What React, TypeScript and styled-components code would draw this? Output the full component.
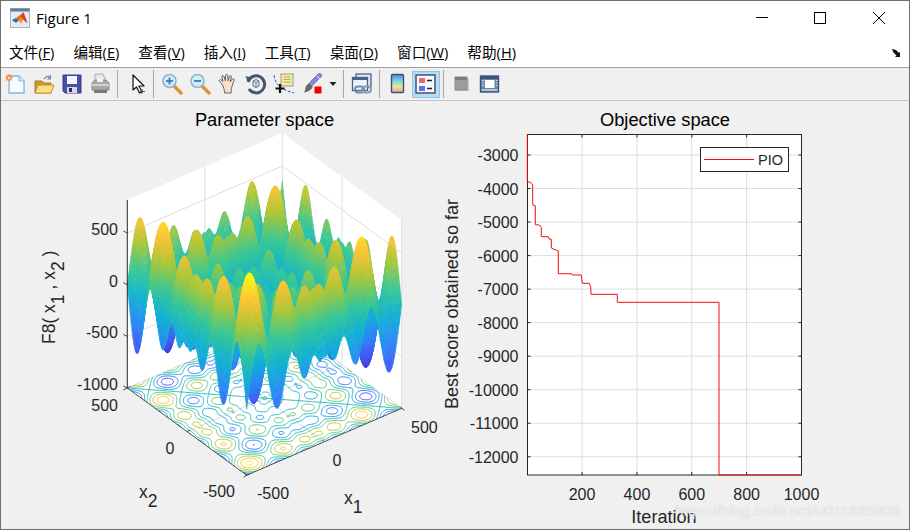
import React, { useMemo } from "react";
import styled, { createGlobalStyle } from "styled-components";

const Global = createGlobalStyle`
  html, body { margin: 0; padding: 0; background: #f0f0f0; }
  #root { width: 910px; height: 530px; }
`;

const Window = styled.div`
  position: relative;
  box-sizing: border-box;
  width: 910px;
  height: 530px;
  border: 1px solid #707070;
  display: flex;
  flex-direction: column;
  background: #f0f0f0;
  overflow: hidden;
`;
const TitleBar = styled.div`
  height: 35px;
  flex: none;
  background: #fff;
  display: flex;
  align-items: center;
  padding: 0 1px 2px 9px;
  box-sizing: border-box;
  font: 15px "Open Sans", "Noto Sans", sans-serif;
  color: #000;
`;
const TitleText = styled.span`
  margin-left: 6px;
  flex: 1;
`;
const WinButton = styled.div`
  width: 58.5px;
  height: 33px;
  display: flex;
  align-items: center;
  justify-content: center;
`;
const MenuBar = styled.div`
  height: 32px;
  flex: none;
  background: #fff;
  display: flex;
  align-items: center;
  gap: 19px;
  padding: 2px 0 3px 8px;
  box-sizing: border-box;
  font: 14.6px "Open Sans", "Noto Sans CJK SC", sans-serif;
  color: #000;
  border-bottom: 1px solid #a0a0a0;
  position: relative;
`;
const MenuItem = styled.span`
  white-space: nowrap;
`;
const DockArrow = styled.svg`
  position: absolute;
  right: 6px;
  top: 12px;
`;
const Toolbar = styled.div`
  height: 33px;
  flex: none;
  box-sizing: border-box;
  display: flex;
  align-items: center;
  border-bottom: 1px solid #c4c4c4;
  background: #f0f0f0;
`;
const ToolButton = styled.div<{ $active?: boolean; $narrow?: boolean; $first?: boolean }>`
  width: ${(p) => (p.$narrow ? 14 : 28)}px;
  height: 27px;
  box-sizing: border-box;
  flex: none;
  margin-left: ${(p) => (p.$first ? 1 : 0)}px;
  display: flex;
  align-items: center;
  justify-content: center;
  background: ${(p) => (p.$active ? "#bcdcf4" : "transparent")};
  border: 1px solid ${(p) => (p.$active ? "#8cc4ee" : "transparent")};
`;
const Separator = styled.div<{ $l: number; $r: number }>`
  width: 1px;
  height: 28px;
  flex: none;
  background: #a8a8a8;
  margin-left: ${(p) => p.$l}px;
  margin-right: ${(p) => p.$r}px;
`;
const Canvas = styled.div`
  flex: 1;
  display: flex;
  min-height: 0;
`;
const LeftChart = styled.svg`
  display: block;
  width: 439px;
  height: 428px;
  flex: none;
`;
const RightChart = styled.svg`
  display: block;
  width: 469px;
  height: 428px;
  flex: none;
`;
const Label = styled.text`
  font-family: "Liberation Sans", Arial, sans-serif;
  font-size: 16px;
  fill: #262626;
`;
const Heading = styled(Label)`
  fill: #000;
  font-size: 18.3px;
`;
const AxisLabel = styled(Label)<{ $large?: boolean }>`
  font-size: ${(p) => (p.$large ? 18.1 : 17.5)}px;
`;
const LegendText = styled(Label)`
  font-size: 14.5px;
`;
const Watermark = styled.span`
  position: absolute;
  right: 9px;
  bottom: 9px;
  font: 15.3px "Liberation Sans", Arial, sans-serif;
  color: rgba(255, 255, 255, 0.72);
  text-shadow: 0 0 1px rgba(150, 150, 150, 0.55);
  white-space: nowrap;
`;

/* ---------- maths ---------- */
const STOPS = [
  [0.2422, 0.1504, 0.6603],
  [0.281, 0.3228, 0.9579],
  [0.1786, 0.5289, 0.9682],
  [0.0689, 0.6948, 0.8394],
  [0.2161, 0.7843, 0.5923],
  [0.672, 0.7793, 0.2227],
  [0.997, 0.7659, 0.2199],
  [0.9769, 0.9839, 0.0805],
];
function parula(t: number) {
  const v = Math.max(0, Math.min(1, t)) * (STOPS.length - 1);
  const i = Math.min(STOPS.length - 2, Math.floor(v));
  const f = v - i;
  const c = STOPS[i].map((a, k) => Math.round(255 * (a + (STOPS[i + 1][k] - a) * f)));
  return `rgb(${c[0]},${c[1]},${c[2]})`;
}
const F = (a: number, b: number) => -a * Math.sin(Math.sqrt(Math.abs(a))) - b * Math.sin(Math.sqrt(Math.abs(b)));
const ZMAX = 838;
const B = [246.7, 475.2];
const R = [401.7, 408.3];
const L = [127.3, 388];
function P(x1: number, x2: number, z: number): [number, number] {
  const a = (x1 + 500) / 1000;
  const b = (x2 + 500) / 1000;
  return [
    B[0] + a * (R[0] - B[0]) + b * (L[0] - B[0]),
    B[1] + a * (R[1] - B[1]) + b * (L[1] - B[1]) - (z + 1000) * 0.1033,
  ];
}
const pt = (p: [number, number]) => `${p[0].toFixed(2)} ${p[1].toFixed(2)}`;

function buildSurface() {
  const N = 125;
  const step = 1000 / N;
  const runs: { c: number; d: string }[] = [];
  for (let i = N - 1; i >= 0; i--) {
    for (let j = N - 1; j >= 0; j--) {
      const x0 = -500 + i * step;
      const x1 = x0 + step;
      const y0 = -500 + j * step;
      const y1 = y0 + step;
      const z00 = F(x0, y0);
      const z10 = F(x1, y0);
      const z11 = F(x1, y1);
      const z01 = F(x0, y1);
      const avg = (z00 + z10 + z11 + z01) / 4;
      const c = Math.max(0, Math.min(63, Math.floor(((avg + ZMAX) / (2 * ZMAX)) * 64)));
      const d = `M${pt(P(x0, y0, z00))}L${pt(P(x1, y0, z10))}L${pt(P(x1, y1, z11))}L${pt(P(x0, y1, z01))}Z`;
      const last = runs[runs.length - 1];
      if (last && last.c === c) last.d += d;
      else runs.push({ c, d });
    }
  }
  return runs;
}
function buildContours() {
  const N = 240;
  const step = 1000 / N;
  const res: { level: number; d: string }[] = [];
  for (let level = -800; level <= 800; level += 200) {
    let d = "";
    for (let i = 0; i < N; i++) {
      for (let j = 0; j < N; j++) {
        const x0 = -500 + i * step;
        const y0 = -500 + j * step;
        const x1 = x0 + step;
        const y1 = y0 + step;
        const cs: [number, number, number, number][] = [
          [x0, y0, x1, y0],
          [x1, y0, x1, y1],
          [x1, y1, x0, y1],
          [x0, y1, x0, y0],
        ];
        const pts: [number, number][] = [];
        for (const [ax, ay, bx, by] of cs) {
          const za = F(ax, ay) - level;
          const zb = F(bx, by) - level;
          if (za < 0 !== zb < 0) {
            const t = za / (za - zb);
            pts.push(P(ax + (bx - ax) * t, ay + (by - ay) * t, -1000));
          }
        }
        if (pts.length >= 2) d += `M${pt(pts[0])}L${pt(pts[1])}`;
        if (pts.length === 4) d += `M${pt(pts[2])}L${pt(pts[3])}`;
      }
    }
    res.push({ level, d });
  }
  return res;
}
const poly = (a: [number, number][]) => a.map((p) => p.map((v) => v.toFixed(2)).join(",")).join(" ");

/* ---------- 3D plot ---------- */
const GRID = "#dedede";
function Surface3D() {
  const runs = useMemo(buildSurface, []);
  const contours = useMemo(buildContours, []);
  const top = ZMAX - 18;
  const wallLines: [[number, number], [number, number]][] = [];
  for (const z of [-1000, -500, 0, 500]) {
    wallLines.push([P(-500, 500, z), P(500, 500, z)]);
    wallLines.push([P(500, 500, z), P(500, -500, z)]);
  }
  for (const [a, b] of [
    [0, 500],
    [500, 500],
    [500, 0],
    [500, -500],
  ]) {
    wallLines.push([P(a, b, -1000), P(a, b, top)]);
  }
  wallLines.push([P(0, -500, -1000), P(0, 500, -1000)]);
  wallLines.push([P(-500, 0, -1000), P(500, 0, -1000)]);
  const outline: [number, number][] = [
    P(-500, -500, -1000),
    P(500, -500, -1000),
    P(500, -500, top),
    P(500, 500, top),
    P(-500, 500, top),
    P(-500, 500, -1000),
  ];
  const axis = "#262626";
  const tick = (p: [number, number], dx: number, dy: number, k: string) => (
    <line key={k} x1={p[0]} y1={p[1]} x2={p[0] + dx} y2={p[1] + dy} stroke={axis} strokeWidth={0.8} />
  );
  return (
    <LeftChart viewBox="1 101 439 428">
      <polygon points={poly(outline)} fill="#fff" />
      {wallLines.map((l, i) => (
        <line key={i} x1={l[0][0]} y1={l[0][1]} x2={l[1][0]} y2={l[1][1]} stroke={GRID} strokeWidth={1} />
      ))}
      {contours.map((c) => (
        <path key={c.level} d={c.d} fill="none" stroke={parula((c.level + ZMAX) / (2 * ZMAX))} strokeWidth={1} />
      ))}
      {runs.map((r, i) => {
        const col = parula((r.c + 0.5) / 64);
        return <path key={i} d={r.d} fill={col} stroke={col} strokeWidth={0.6} strokeLinejoin="round" />;
      })}
      <line x1={L[0]} y1={L[1]} x2={B[0]} y2={B[1]} stroke={axis} strokeWidth={0.8} />
      <line x1={B[0]} y1={B[1]} x2={R[0]} y2={R[1]} stroke={axis} strokeWidth={0.8} />
      <line x1={L[0]} y1={L[1]} x2={L[0]} y2={P(-500, 500, top)[1]} stroke={axis} strokeWidth={1} />
      {[-1000, -500, 0, 500].map((z) => tick(P(-500, 500, z), -4, -2, `z${z}`))}
      {[-500, 0, 500].map((v) => tick(P(-500, v, -1000), 3, -1.5, `a${v}`))}
      {[-500, 0, 500].map((v) => tick(P(v, -500, -1000), -2, -2, `b${v}`))}
      {tick(P(500, -500, -1000), 3, 2, "c")}
      {tick(P(-500, -500, -1000), -3, 2, "d")}
      {tick(P(-500, 500, -1000), -4, 2, "e")}

      <Heading x={264.5} y={126} textAnchor="middle">Parameter space</Heading>
      <Label x={118} y={235} textAnchor="end">500</Label>
      <Label x={118} y={287} textAnchor="end">0</Label>
      <Label x={118} y={338} textAnchor="end">-500</Label>
      <Label x={118} y={390} textAnchor="end">-1000</Label>
      <Label x={118} y={411} textAnchor="end">500</Label>
      <Label x={170} y={454} textAnchor="middle">0</Label>
      <Label x={235} y={497} textAnchor="end">-500</Label>
      <Label x={257} y={499}>-500</Label>
      <Label x={337} y={466} textAnchor="middle">0</Label>
      <Label x={411} y={433}>500</Label>
      <AxisLabel x={139} y={498}>
        x<tspan dy={9}>2</tspan>
      </AxisLabel>
      <AxisLabel x={344} y={504}>
        x<tspan dy={9}>1</tspan>
      </AxisLabel>
      <AxisLabel transform="translate(55 344) rotate(-90)">
        F8( x<tspan dy={9}>1</tspan>
        <tspan dy={-9}> , x</tspan>
        <tspan dy={9}>2</tspan>
        <tspan dy={-9}> )</tspan>
      </AxisLabel>
    </LeftChart>
  );
}

/* ---------- 2D plot ---------- */
const AX = { l: 527.5, r: 801.5, t: 134.5, b: 475 };
const CURVE: [number, number][] = [
  [52, 13], [52, 155], [62, 157], [68, 165], [68, 225], [76, 227], [76, 284], [88, 285], [94, 292], [94, 320],
  [115, 320], [117, 327], [124, 328], [124, 354], [132, 358], [145, 363], [145, 431], [185, 431], [187, 435],
  [214, 435], [217, 460], [238, 460], [242, 470], [243, 493], [322, 493], [322, 517], [627, 517], [627, 1035], [875, 1035],
];
function ConvergencePlot() {
  const xt = [200, 400, 600, 800, 1000];
  const yt = [-3000, -4000, -5000, -6000, -7000, -8000, -9000, -10000, -11000, -12000];
  const X = (v: number) => AX.l + ((v - 1) / 999) * (AX.r - AX.l);
  const Y = (v: number) => 155 + (-3000 - v) * 0.03353;
  const dark = "#262626";
  const curve = CURVE.map(([x, y]) => `${(510 + x / 3).toFixed(1)},${(130 + y / 3).toFixed(1)}`).join(" ");
  return (
    <RightChart viewBox="440 101 469 428">
      <rect x={AX.l} y={AX.t} width={AX.r - AX.l} height={AX.b - AX.t} fill="#fff" />
      {xt.slice(0, 4).map((v) => (
        <line key={v} x1={X(v)} x2={X(v)} y1={AX.t} y2={AX.b} stroke={GRID} />
      ))}
      {yt.map((v) => (
        <line key={v} x1={AX.l} x2={AX.r} y1={Y(v)} y2={Y(v)} stroke={GRID} />
      ))}
      {xt.map((v) => (
        <g key={v}>
          <line x1={X(v)} x2={X(v)} y1={AX.b} y2={AX.b - 3} stroke={dark} />
          <line x1={X(v)} x2={X(v)} y1={AX.t} y2={AX.t + 3} stroke={dark} />
          <Label x={X(v)} y={500} textAnchor="middle">{v}</Label>
        </g>
      ))}
      {yt.map((v) => (
        <g key={v}>
          <line x1={AX.l} x2={AX.l + 3} y1={Y(v)} y2={Y(v)} stroke={dark} />
          <line x1={AX.r} x2={AX.r - 3} y1={Y(v)} y2={Y(v)} stroke={dark} />
          <Label x={518.5} y={Y(v) + 6} textAnchor="end">{v}</Label>
        </g>
      ))}
      <rect x={AX.l} y={AX.t} width={AX.r - AX.l} height={AX.b - AX.t} fill="none" stroke={dark} />
      <polyline points={curve} fill="none" stroke="#f01010" strokeWidth={1} />
      <rect x={700.5} y={147.5} width={88} height={24} fill="#fff" stroke={dark} />
      <line x1={704} x2={754} y1={159.5} y2={159.5} stroke="#f01010" />
      <LegendText x={758} y={165}>PIO</LegendText>
      <Heading x={665} y={126} textAnchor="middle">Objective space</Heading>
      <AxisLabel $large x={664} y={523} textAnchor="middle">Iteration</AxisLabel>
      <AxisLabel $large transform="translate(458 304) rotate(-90)" textAnchor="middle">Best score obtained so far</AxisLabel>
    </RightChart>
  );
}

/* ---------- icons ---------- */
const Icon = ({ children, w = 22, h = 22 }: { children: React.ReactNode; w?: number; h?: number }) => (
  <svg width={w} height={h} viewBox={`0 0 ${w} ${h}`}>{children}</svg>
);
const IconNew = () => (
  <Icon>
    <path d="M4 3h10l5 5v12H4z" fill="#f6fbff" stroke="#8fb4d4" strokeWidth="1.4" />
    <path d="M14 3v5h5" fill="#d4e6f4" stroke="#8fb4d4" />
    <path d="M4 0.5l1 2 2.3-1-1 2.3 2 1-2 1 1 2.3-2.3-1-1 2-1-2-2.3 1 1-2.3-2-1 2-1-1-2.3 2.3 1z" fill="#f08a50" />
    <circle cx="4" cy="5" r="1.3" fill="#fde2c8" />
  </Icon>
);
const IconOpen = () => (
  <Icon>
    <path d="M2 8h7l2 2h7v10H2z" fill="#c89a34" stroke="#a87c28" />
    <path d="M2 20l3-8h16l-3 8z" fill="#fbe07c" stroke="#c09436" />
    <path d="M11 6c2-3 5-3 7-2" fill="none" stroke="#7c98b8" strokeWidth="1.6" />
    <path d="M18 1.5v5h-4z" fill="#6c8cb0" />
  </Icon>
);
const IconSave = () => (
  <Icon>
    <path d="M2 2h18v18H4l-2-2z" fill="#4650a8" stroke="#363c88" />
    <rect x="6" y="3" width="10" height="8" fill="#f4f6ff" />
    <rect x="6" y="14" width="10" height="6" fill="#d8d8e4" />
    <rect x="8" y="15" width="3" height="4" fill="#222a60" />
  </Icon>
);
const IconPrint = () => (
  <Icon>
    <path d="M6 1h8l3 7H6z" fill="#dce8f0" stroke="#a8b0b8" />
    <path d="M3 10l3-3h11l3 3v7H3z" fill="#a8a8a8" stroke="#888" />
    <path d="M3 12h17" stroke="#e0e0e0" strokeWidth="1.5" />
    <path d="M5 17h13v3H5z" fill="#787878" />
    <path d="M8 5h6v4H8z" fill="#f0f4f6" />
  </Icon>
);
const IconPointer = () => (
  <Icon>
    <path d="M6 2v15l3.5-3 3 6 2.4-1.2-3-5.8H17z" fill="#fff" stroke="#111" strokeWidth="1.2" strokeLinejoin="round" />
    <path d="M15 16v5M13 18.5h5" stroke="#333" strokeWidth="0.8" />
  </Icon>
);
const Lens = ({ plus }: { plus: boolean }) => (
  <Icon>
    <path d="M12.5 12.5L20 20" stroke="#e09030" strokeWidth="3.4" strokeLinecap="round" />
    <circle cx="8.5" cy="8" r="6.5" fill="#d4ecf8" stroke="#90b4cc" strokeWidth="1.6" />
    <path d="M5 8h7" stroke="#3a7ab0" strokeWidth="1.8" />
    {plus && <path d="M8.5 4.5v7" stroke="#3a7ab0" strokeWidth="1.8" />}
  </Icon>
);
const IconHand = () => (
  <Icon>
    <path
      d="M5 11L2.5 8.5c-1-1 .5-2.5 1.7-1.5L6 8.5 4.8 3.8c-.3-1.4 1.7-1.8 2.1-.5L8.4 7.8 8.6 2.4c0-1.4 2-1.4 2.1 0l.4 5.4 1.4-4.5c.4-1.3 2.2-.8 1.9.6l-1.2 5 2.3-2.9c.9-1 2.3.1 1.6 1.3L14.8 14c-.6 1.4-.6 4-.6 6H7.6c0-3-1.2-6.4-2.6-9z"
      fill="#fbe0c8"
      stroke="#5c6478"
      strokeWidth="1"
    />
  </Icon>
);
const IconRotate = () => (
  <Icon>
    <path d="M3 9a8.5 8.5 0 1 1 1 7" fill="none" stroke="#44566c" strokeWidth="3" />
    <path d="M0.5 3l6 1.5-4 4z" fill="#44566c" />
    <path d="M8 8l3-1.5 3 1.5v5l-3 1.5-3-1.5z" fill="#d6e0e8" stroke="#5c7088" />
    <path d="M8 8l3 1.5 3-1.5M11 9.5v5" fill="none" stroke="#5c7088" strokeWidth="0.7" />
  </Icon>
);
const IconData = () => (
  <Icon>
    <path d="M1 2c1 8 5 14 20 18" fill="none" stroke="#4040e0" strokeWidth="1" strokeDasharray="3 1.5" />
    <rect x="8" y="1" width="12" height="12" fill="#f4eda8" stroke="#9c9c70" />
    <path d="M10.5 4h7M10.5 6.5h7M10.5 9h7" stroke="#b0aa70" />
    <path d="M7 11v9M2.5 15.5h9" stroke="#111" strokeWidth="2.2" />
  </Icon>
);
const IconBrush = () => (
  <Icon>
    <path d="M20 1c1 1 1 2 0 3l-8 8-3-3 8-8c1-1 2-1 3 0z" fill="#8488dc" stroke="#5a5ea8" strokeWidth="0.6" />
    <path d="M16 3l3 3" stroke="#e0e0f6" strokeWidth="1" />
    <path d="M8.500 9.500l3.500 3.500c-1 3-3 5.500-9 6.500 1.500-2 1-4 2-6.500z" fill="#6a6a6a" />
    <rect x="13.500" y="13.500" width="7" height="7" fill="#f40000" />
  </Icon>
);
const IconLink = () => (
  <Icon>
    <rect x="5" y="1" width="15" height="13" fill="#dfe8f2" stroke="#47638c" strokeWidth="1.3" />
    <rect x="1.500" y="4.500" width="15" height="13" fill="#eef2f8" stroke="#47638c" strokeWidth="1.3" />
    <path d="M1.500 4.500h15v2.500h-15z" fill="#47638c" />
    <rect x="4" y="13.500" width="9" height="6" rx="3" fill="none" stroke="#7488a8" strokeWidth="2" />
    <rect x="11" y="13.500" width="9" height="6" rx="3" fill="none" stroke="#8c9cb8" strokeWidth="2" />
  </Icon>
);
const IconColorbar = () => (
  <Icon w={16} h={22}>
    <defs>
      <linearGradient id="cbar" x1="0" y1="0" x2="0" y2="1">
        <stop offset="0" stopColor="#5a7ee0" />
        <stop offset="0.35" stopColor="#78d4dc" />
        <stop offset="0.65" stopColor="#e4e890" />
        <stop offset="1" stopColor="#f0a0b0" />
      </linearGradient>
    </defs>
    <rect x="1.500" y="1.500" width="12" height="18" rx="1" fill="url(#cbar)" stroke="#38507c" strokeWidth="1.400" />
  </Icon>
);
const IconLegend = () => (
  <Icon>
    <rect x="1" y="2" width="19" height="18" fill="#f6f8fc" stroke="#3e5478" strokeWidth="1.500" />
    <rect x="4" y="5" width="6" height="5" fill="#e86a70" />
    <rect x="4" y="13" width="6" height="5" fill="#6c6ce4" />
    <path d="M12 7.500h5M12 15.500h5" stroke="#222" strokeWidth="1.400" />
  </Icon>
);
const IconHide = () => (
  <Icon w={18} h={22}>
    <rect x="3" y="5" width="13" height="13" rx="1" fill="#c8c8c8" />
    <rect x="2" y="4" width="12" height="13" fill="#9c9c9c" stroke="#8c8c8c" />
    <rect x="2" y="4" width="12" height="3" fill="#7c7c7c" />
  </Icon>
);
const IconTools = () => (
  <Icon>
    <rect x="1.500" y="3" width="18" height="16" fill="#6a84a8" stroke="#3c5478" strokeWidth="1.400" />
    <rect x="1.500" y="3" width="18" height="3" fill="#3c5478" />
    <rect x="6" y="7" width="9.500" height="8" fill="#fff" />
    <rect x="2.500" y="16" width="16" height="2" fill="#b8c2d0" />
    <path d="M3 7.500h2M3 10h2M3 12.500h2M17 7.500h1.500M17 10h1.500M17 12.500h1.500" stroke="#d0d8e4" strokeWidth="1" />
  </Icon>
);
const Logo = () => (
  <svg width="20" height="20" viewBox="0 0 20 20">
    <rect x="0.500" y="0.500" width="19" height="19" fill="#e4eaf0" stroke="#a8b4c0" />
    <rect x="0.500" y="0.500" width="19" height="3" fill="#5c7c9c" />
    <path d="M2 12l4-2 3 2-3 3z" fill="#2c6cb0" />
    <path d="M6 10l4-3 3-2 2 6-5 3z" fill="#e46c20" />
    <path d="M11 8l2.500-4 4 11-3-2z" fill="#d8401c" />
    <path d="M9 12l2 4 2-4-2-2z" fill="#f4a030" />
  </svg>
);

const MENUS: [string, string][] = [
  ["文件", "F"],
  ["编辑", "E"],
  ["查看", "V"],
  ["插入", "I"],
  ["工具", "T"],
  ["桌面", "D"],
  ["窗口", "W"],
  ["帮助", "H"],
];

export default function App() {
  return (
    <Window>
      <Global />
      <TitleBar>
        <Logo />
        <TitleText>Figure 1</TitleText>
        <WinButton>
          <svg width="14" height="14"><path d="M1 6.500h12" stroke="#000" /></svg>
        </WinButton>
        <WinButton>
          <svg width="14" height="14"><rect x="1.500" y="1.500" width="11" height="11" fill="none" stroke="#000" /></svg>
        </WinButton>
        <WinButton>
          <svg width="14" height="14"><path d="M1 1l12 12M13 1L1 13" stroke="#000" /></svg>
        </WinButton>
      </TitleBar>
      <MenuBar>
        {MENUS.map(([t, k]) => (
          <MenuItem key={k}>
            {t}(<u>{k}</u>)
          </MenuItem>
        ))}
        <DockArrow width="12" height="10" viewBox="0 0 12 10">
          <path d="M1 1l4 1 3 3 1-1.500V9H4l1.500-1.500L2 4z" fill="#111" />
        </DockArrow>
      </MenuBar>
      <Toolbar>
        <ToolButton $first><IconNew /></ToolButton>
        <ToolButton><IconOpen /></ToolButton>
        <ToolButton><IconSave /></ToolButton>
        <ToolButton><IconPrint /></ToolButton>
        <Separator $l={3} $r={6} />
        <ToolButton><IconPointer /></ToolButton>
        <Separator $l={1} $r={4} />
        <ToolButton><Lens plus /></ToolButton>
        <ToolButton><Lens plus={false} /></ToolButton>
        <ToolButton><IconHand /></ToolButton>
        <ToolButton><IconRotate /></ToolButton>
        <ToolButton><IconData /></ToolButton>
        <ToolButton><IconBrush /></ToolButton>
        <ToolButton $narrow>
          <svg width="8" height="6"><path d="M0.500 1h7L4 5z" fill="#222" /></svg>
        </ToolButton>
        <Separator $l={3} $r={4} />
        <ToolButton><IconLink /></ToolButton>
        <Separator $l={3} $r={4} />
        <ToolButton><IconColorbar /></ToolButton>
        <ToolButton $active><IconLegend /></ToolButton>
        <Separator $l={3} $r={4} />
        <ToolButton><IconHide /></ToolButton>
        <ToolButton><IconTools /></ToolButton>
      </Toolbar>
      <Canvas>
        <Surface3D />
        <ConvergencePlot />
      </Canvas>
      <Watermark>https://blog.csdn.net/u011835903</Watermark>
    </Window>
  );
}
